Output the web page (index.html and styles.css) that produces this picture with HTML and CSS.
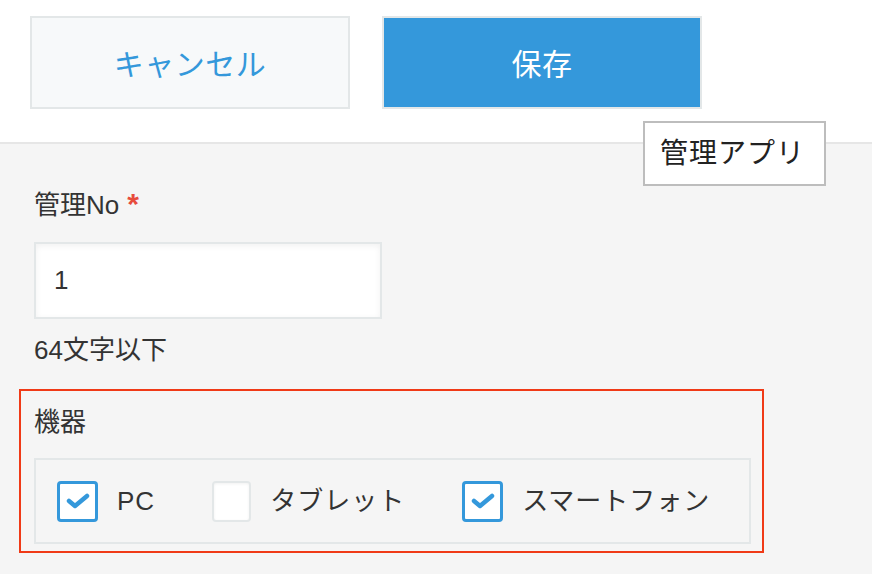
FILE: index.html
```html
<!DOCTYPE html>
<html lang="ja">
<head>
<meta charset="utf-8">
<link rel="stylesheet" href="styles.css">
</head>
<body>
<div class="page">
  <header class="toolbar">
    <button class="btn btn-cancel">キャンセル</button>
    <button class="btn btn-save">保存</button>
  </header>
  <main class="form">
    <div class="field">
      <div class="label">管理No<span class="req">*</span></div>
      <div class="input">1</div>
      <div class="hint">64文字以下</div>
    </div>
    <div class="field-highlight">
      <div class="label">機器</div>
      <div class="checks">
        <label class="check">
          <span class="box on"><svg viewBox="0 0 24 16" width="24" height="16"><path d="M3 8 L9 13 L21 3" fill="none" stroke="#3498db" stroke-width="4.5" stroke-linecap="round" stroke-linejoin="round"/></svg></span>
          <span class="check-text">PC</span>
        </label>
        <label class="check">
          <span class="box off"></span>
          <span class="check-text">タブレット</span>
        </label>
        <label class="check">
          <span class="box on"><svg viewBox="0 0 24 16" width="24" height="16"><path d="M3 8 L9 13 L21 3" fill="none" stroke="#3498db" stroke-width="4.5" stroke-linecap="round" stroke-linejoin="round"/></svg></span>
          <span class="check-text">スマートフォン</span>
        </label>
      </div>
    </div>
  </main>
  <div class="tooltip">管理アプリ</div>
</div>
</body>
</html>
```
FILE: styles.css
```css
* { box-sizing: border-box; }
html, body {
  margin: 0;
  padding: 0;
  background: #f5f5f5;
  font-family: "Liberation Sans", "Noto Sans CJK JP", sans-serif;
  color: #333;
}
.page {
  position: relative;
  width: 872px;
  height: 574px;
  overflow: hidden;
}
.toolbar {
  background: #fff;
  height: 144px;
  border-bottom: 2px solid #e6e6e6;
  padding: 16px 0 0 30px;
  display: flex;
  gap: 32px;
  align-items: flex-start;
}
.btn {
  width: 320px;
  height: 93px;
  border: 2px solid #e3e7e8;
  font-family: inherit;
  font-size: 30px;
  padding: 5px 0 0;
  line-height: 1;
  letter-spacing: 0.5px;
}
.btn-cancel {
  background: #f7f9fa;
  color: #3498db;
}
.btn-save {
  background: #3498db;
  color: #fff;
}
.form {
  padding: 43px 0 0 34px;
}
.label {
  font-size: 26px;
  line-height: 34px;
  height: 34px;
}
.req {
  color: #e74c3c;
  margin-left: 8px;
  font-size: 30px;
  font-weight: bold;
}
.input {
  margin-top: 21px;
  width: 348px;
  height: 77px;
  background: #fff;
  border: 2px solid #e3e7e8;
  box-shadow: inset 0 2px 6px rgba(0,0,0,0.06);
  font-size: 26px;
  line-height: 73px;
  padding-left: 18px;
}
.hint {
  margin-top: 14px;
  font-size: 26px;
  line-height: 34px;
}
.field-highlight {
  margin: 22px 0 0 -15px;
  width: 745px;
  border: 2px solid #f03a17;
  padding: 14px 11px 7px 13px;
}
.checks {
  margin-top: 19px;
  height: 86px;
  border: 2px solid #e3e7e8;
  display: flex;
  align-items: center;
  padding-left: 21px;
  gap: 57px;
}
.check {
  display: flex;
  align-items: center;
  gap: 19px;
}
.box {
  width: 41px;
  height: 41px;
  border-radius: 4px;
  background: #fff;
  display: flex;
  align-items: center;
  justify-content: center;
}
.box.on {
  border: 3px solid #3498db;
}
.box.off {
  width: 39px;
  border: 2px solid #e3e7e8;
  box-shadow: inset 0 1px 3px rgba(0,0,0,0.06);
}
.check-text {
  font-size: 26px;
  line-height: 34px;
  letter-spacing: 1px;
}
.tooltip {
  position: absolute;
  left: 643px;
  top: 121px;
  width: 183px;
  height: 65px;
  background: #fff;
  border: 2px solid #bdbdbd;
  font-size: 28px;
  line-height: 62px;
  padding-left: 15px;
  color: #222;
  letter-spacing: 1px;
}
```
